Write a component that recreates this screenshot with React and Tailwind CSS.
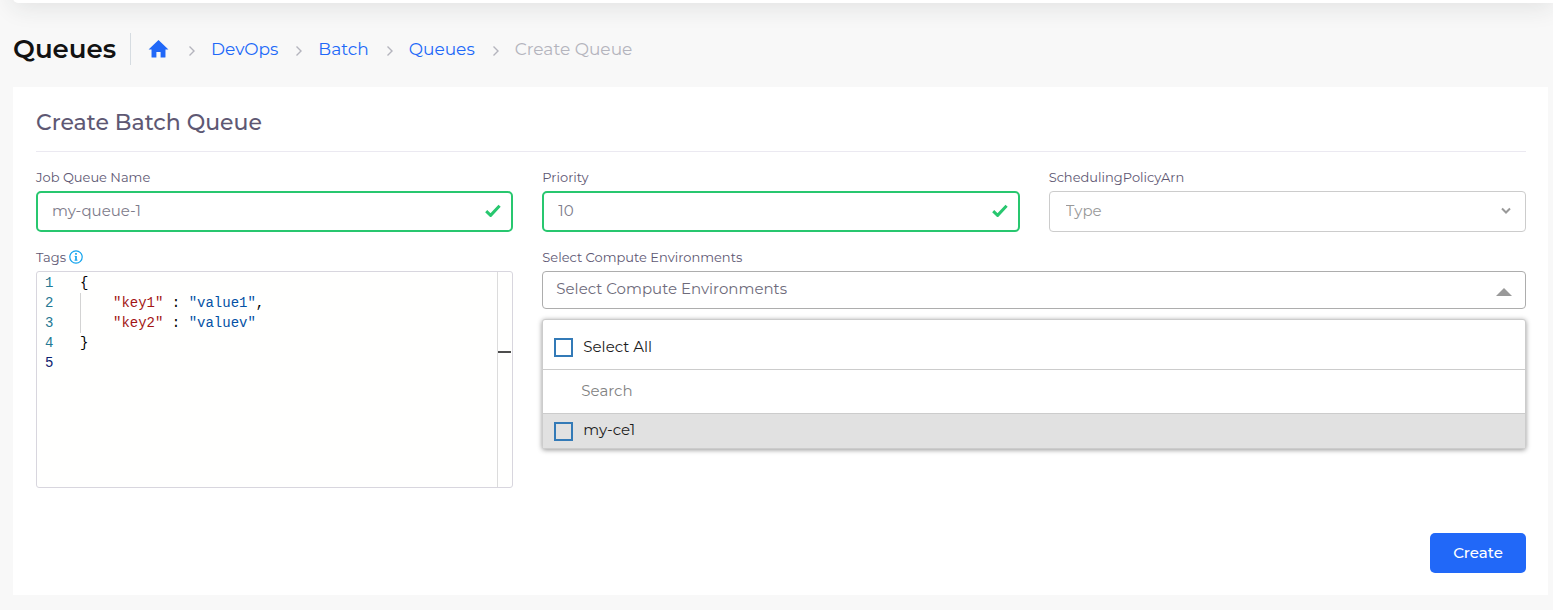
import { useState } from 'react';

function HomeIcon() {
  return (
    <svg viewBox="0 0 22 20" className="h-5 w-[21px]" fill="#2168f8" aria-hidden="true">
      <path d="M11 0.6 L21.4 10.4 H18.3 V18.4 Q18.3 19 17.7 19 H13.2 V13.2 H8.8 V19 H4.3 Q3.7 19 3.7 18.4 V10.4 H0.6 Z" />
    </svg>
  );
}

function Separator() {
  return (
    <svg viewBox="0 0 8 12" className="mt-1 h-3 w-2" fill="none" stroke="#b4b4bd" strokeWidth="1.4" aria-hidden="true">
      <path d="M1.5 1.5 L6 6 L1.5 10.5" />
    </svg>
  );
}

function ValidField({ id, label, value, onChange }) {
  return (
    <div>
      <label htmlFor={id} className="block text-[13px] leading-5 text-[#5e5873]">{label}</label>
      <div className="relative mt-1">
        <input
          id={id}
          value={value}
          onChange={(e) => onChange(e.target.value)}
          className="block h-[41px] w-full rounded-[5px] border-2 border-[#28c76f] bg-white pb-0.5 pr-10 pl-3.5 text-[15px] text-[#7d7b8a] outline-none"
        />
        <svg viewBox="0 0 16 14" className="absolute top-[13px] right-3 h-3.5 w-4" fill="none" stroke="#28c76f" strokeWidth="3" aria-hidden="true">
          <path d="M1.2 7.2 L5.6 11.4 L14.6 1.8" strokeLinejoin="round" />
        </svg>
      </div>
    </div>
  );
}

function Option({ id, label, className }) {
  return (
    <div className={className}>
      <input
        id={id}
        type="checkbox"
        className="size-[19px] shrink-0 appearance-none border-2 border-[#337ab7] bg-transparent checked:bg-[#337ab7]"
      />
      <label htmlFor={id} className="ml-2.5 pb-0.5 text-[15px] leading-5 text-[#1c1c1c]">{label}</label>
    </div>
  );
}

const entries = [
  ['"key1"', '"value1"', ','],
  ['"key2"', '"valuev"', ''],
];

function CodeEditor() {
  return (
    <div className="mt-1 flex h-[217px] rounded-[3px] border border-[#d8d6de] bg-[#fffffe] font-['Consolas','Liberation_Mono',monospace] text-[14px] leading-5">
      <div className="w-[43px] pt-px pl-2 text-[#237893]" aria-hidden="true">
        <div>1</div>
        <div>2</div>
        <div>3</div>
        <div>4</div>
        <div className="text-[#0b216f]">5</div>
      </div>
      <div
        role="textbox"
        aria-multiline="true"
        aria-labelledby="tags-label"
        contentEditable
        suppressContentEditableWarning
        spellCheck={false}
        className="flex-1 pt-px whitespace-pre text-black outline-none"
      >
        <div>{'{'}</div>
        <div className="border-l border-[#d3d3d3] pl-8">
          {entries.map(([key, value, end]) => (
            <div key={key}>
              <span className="text-[#a31515]">{key}</span>
              {' : '}
              <span className="text-[#0451a5]">{value}</span>
              {end}
            </div>
          ))}
        </div>
        <div>{'}'}</div>
      </div>
      <div className="w-[15px] border-l border-[#dcdcdc] pt-[79px]">
        <div className="h-0.5 w-[13px] bg-[#4d4d4d]" />
      </div>
    </div>
  );
}

const crumbs = ['DevOps', 'Batch', 'Queues'];

export default function App() {
  const [name, setName] = useState('my-queue-1');
  const [priority, setPriority] = useState('10');
  const [open, setOpen] = useState(true);

  return (
    <div className="flow-root min-h-screen bg-[#f8f8f8] pr-[5px] pb-[15px] pl-[13px] font-['Montserrat','Inter',sans-serif]">
      <div className="-mt-15 -mr-[5px] h-[63px] rounded-bl-[5px] bg-white shadow-[0_4px_24px_0_rgba(34,41,47,0.11)]" />

      <header className="flex h-21 items-center pt-2">
        <h1 className="border-r border-[#d6dce1] pr-3.5 text-[26px] leading-8 font-semibold text-[#121212]">Queues</h1>
        <nav aria-label="Breadcrumb" className="ml-[17px]">
          <ol className="flex items-center gap-[17px] text-[17px] leading-6">
            <li className="pr-0.5"><a href="#home" aria-label="Home" className="block"><HomeIcon /></a></li>
            {crumbs.map((c) => (
              <li key={c} className="flex items-center gap-[15px]">
                <Separator />
                <a href={`#${c.toLowerCase()}`} className="text-[#2168f8]">{c}</a>
              </li>
            ))}
            <li className="flex items-center gap-[15px] text-[#b4b4bd]"><Separator />Create Queue</li>
          </ol>
        </nav>
      </header>

      <main className="bg-white pt-5 pr-[22px] pb-[22px] pl-[23px]">
        <h2 className="border-b border-[#ebe9f1] pt-px pb-[13px] text-[22px] leading-[30px] font-medium text-[#5e5873]">Create Batch Queue</h2>

        <form onSubmit={(e) => e.preventDefault()}>
          <div className="grid grid-cols-3 gap-x-[29px] gap-y-[15px] pt-[15px]">
            <ValidField id="queue-name" label="Job Queue Name" value={name} onChange={setName} />
            <ValidField id="priority" label="Priority" value={priority} onChange={setPriority} />
            <div>
              <label htmlFor="policy" className="block text-[13px] leading-5 text-[#5e5873]">SchedulingPolicyArn</label>
              <div className="relative mt-1">
                <select id="policy" className="block h-[41px] w-full appearance-none rounded-[4px] border border-[#cccccc] bg-white pr-10 pl-4 text-[15px] text-[#999999] outline-none">
                  <option>Type</option>
                </select>
                <svg viewBox="0 0 10 8" className="pointer-events-none absolute top-4 right-[15px] h-2 w-2.5" fill="none" stroke="#999999" strokeWidth="2" aria-hidden="true">
                  <path d="M1 1.5 L5 5.5 L9 1.5" />
                </svg>
              </div>
            </div>

            <div>
              <div className="flex items-center gap-[3px] text-[13px] leading-5 text-[#5e5873]">
                <span id="tags-label">Tags</span>
                <svg viewBox="0 0 14 14" className="size-3.5" fill="none" stroke="#14a4ee" aria-hidden="true">
                  <circle cx="7" cy="7" r="6.2" strokeWidth="1.2" />
                  <path d="M7 3 V4.8 M7 6 V10.6" strokeWidth="1.7" />
                  <path d="M5.6 6.4 H7 M5.4 10.2 H8.6" strokeWidth="0.8" />
                </svg>
              </div>
              <CodeEditor />
            </div>

            <div className="col-span-2">
              <label htmlFor="environments" className="block text-[13px] leading-5 text-[#5e5873]">Select Compute Environments</label>
              <div className="relative mt-1">
                <button
                  id="environments"
                  type="button"
                  aria-expanded={open}
                  onClick={() => setOpen(!open)}
                  className="flex h-[38px] w-full items-center justify-between rounded-[4px] border border-[#adadad] bg-white pr-[13px] pb-0.5 pl-[13px] text-left text-[15px] text-[#6e6b7b]"
                >
                  Select Compute Environments
                  <svg viewBox="0 0 16 8" className="mt-1.5 h-2 w-4" fill="#999999" aria-hidden="true">
                    <path d="M8 0 L16 8 H0 Z" />
                  </svg>
                </button>
                {open && (
                  <div className="absolute inset-x-0 top-12 z-10 rounded-[3px] border border-[#cccccc] bg-white shadow-[0_1px_5px_#959595]">
                    <Option id="select-all" label="Select All" className="flex h-[50px] items-center border-b border-[#cccccc] pt-1.5 pl-[11px]" />
                    <input
                      type="text"
                      aria-label="Search"
                      placeholder="Search"
                      className="block h-11 w-full border-b border-[#cccccc] bg-white pb-0.5 pl-[38px] text-[15px] outline-none placeholder:text-[#828282]"
                    />
                    <Option id="my-ce1" label="my-ce1" className="flex h-[34px] items-center bg-[#e1e1e1] pl-[11px]" />
                  </div>
                )}
              </div>
            </div>
          </div>

          <div className="mt-[45px] flex justify-end">
            <button type="submit" className="h-10 w-24 rounded-[5px] bg-[#2168f8] text-[15px] font-medium text-white">Create</button>
          </div>
        </form>
      </main>
    </div>
  );
}
